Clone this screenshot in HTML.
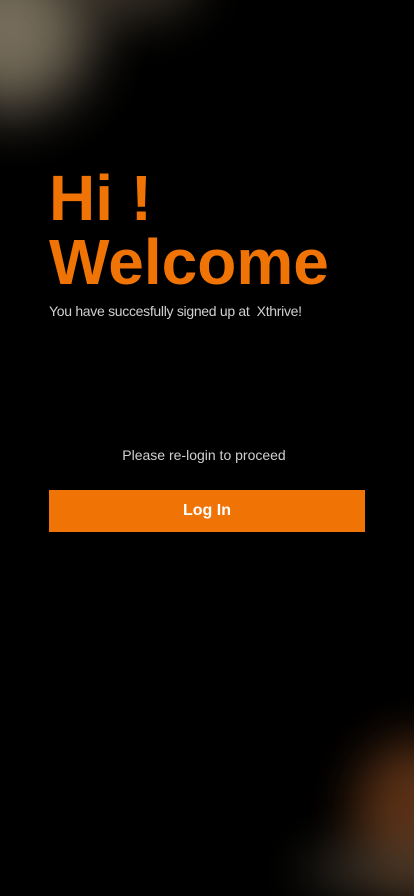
<!DOCTYPE html>
<html><head><meta charset="utf-8"><style>
html,body{margin:0;padding:0;width:414px;height:896px;overflow:hidden;}
body{background:#000;position:relative;font-family:"Liberation Sans",sans-serif;}
.wrap{position:absolute;left:0;top:0;width:414px;height:896px;overflow:hidden;}
.g{position:absolute;border-radius:50%;}
.h{position:absolute;left:49px;color:#f07306;font-weight:bold;font-size:64px;letter-spacing:0px;line-height:1;margin:0;}
</style></head><body>
<div class="wrap">
<div class="g" style="left:-70px;top:-50px;width:160px;height:160px;background:#8a7f6a;filter:blur(30px);opacity:.85"></div>
<div class="g" style="left:60px;top:-60px;width:140px;height:80px;background:#5a5040;filter:blur(25px);opacity:.6"></div>
<div class="g" style="left:355px;top:740px;width:120px;height:150px;background:#6a3a1a;filter:blur(25px);opacity:.85"></div>
<div class="g" style="left:300px;top:850px;width:180px;height:40px;background:#4a4236;filter:blur(25px);opacity:.85"></div>
</div>
<div class="h" style="top:166px">Hi !</div>
<div class="h" style="top:230px">Welcome</div>
<div style="position:absolute;left:49px;top:303px;color:#d0d0d0;font-size:14px;letter-spacing:-0.3px">You have succesfully signed up at&nbsp; Xthrive!</div>
<div style="position:absolute;left:0;width:408px;text-align:center;top:447px;color:#d0d0d0;font-size:14px">Please re-login to proceed</div>
<div style="position:absolute;left:49px;top:490px;width:316px;height:42px;background:#f07306;color:#fff;font-weight:bold;font-size:16px;text-align:center;line-height:42px">Log In</div>
</body></html>
